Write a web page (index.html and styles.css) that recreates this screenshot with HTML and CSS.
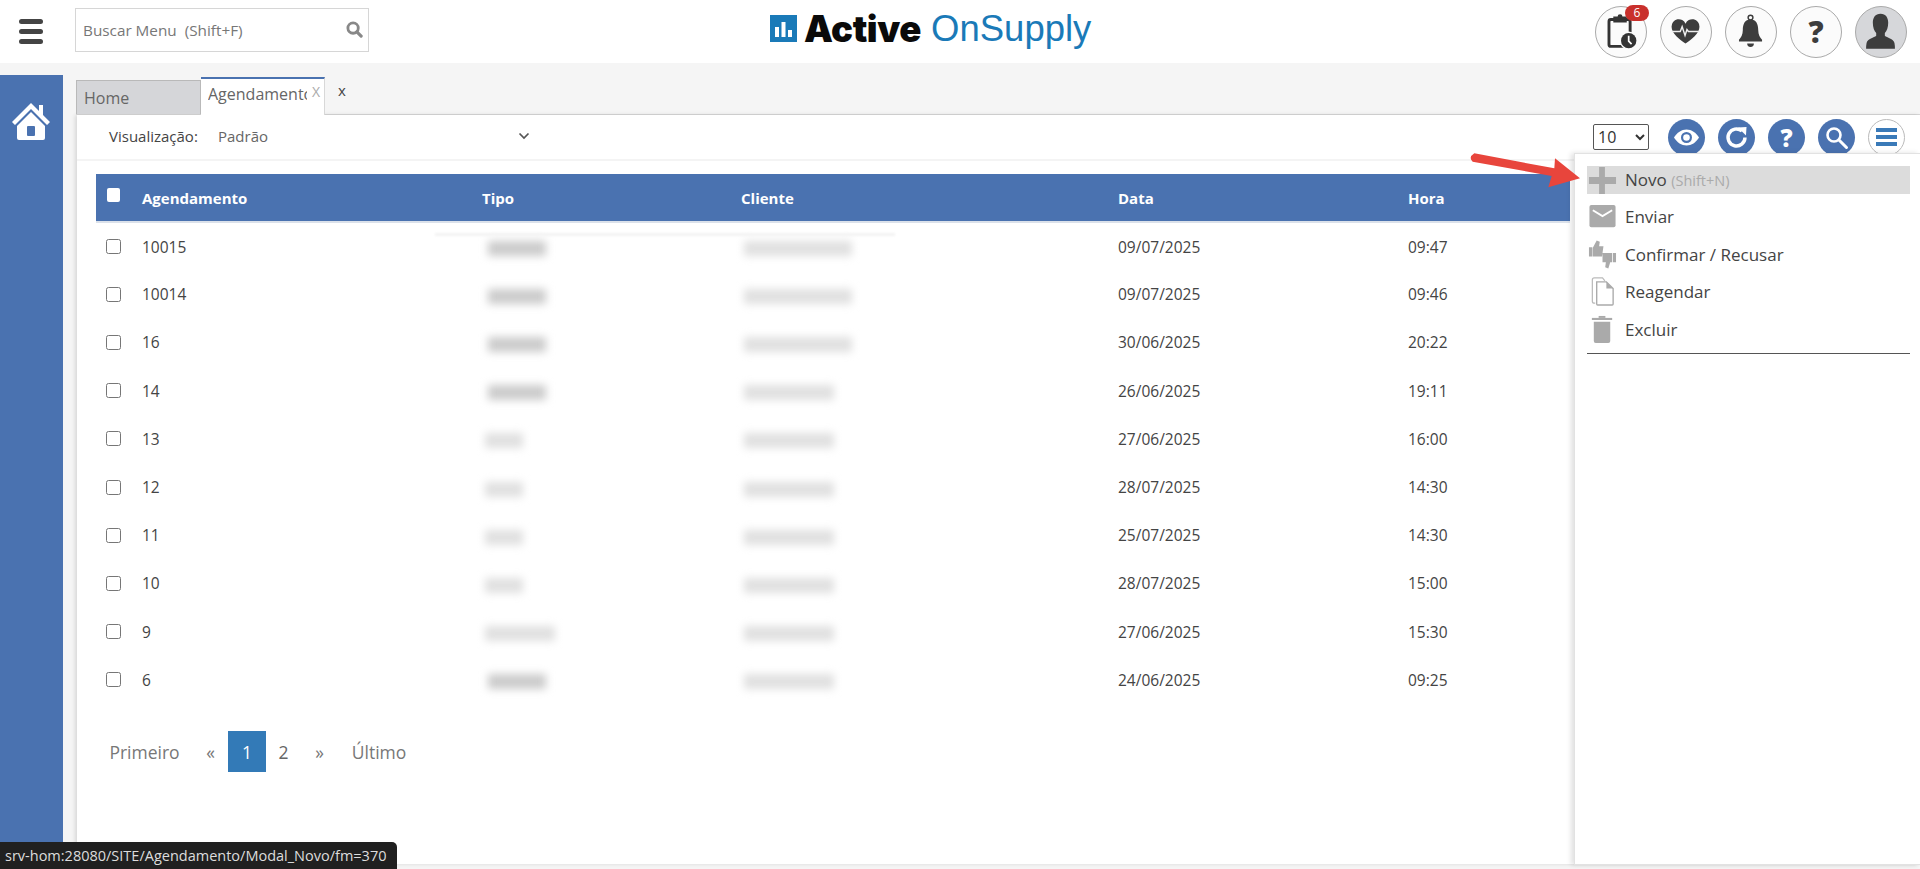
FILE: index.html
```html
<!DOCTYPE html>
<html lang="pt-BR">
<head>
<meta charset="utf-8">
<title>Active OnSupply</title>
<link rel="stylesheet" href="styles.css">
</head>
<body>
<header class="topbar">
  <div class="burger"><span></span><span></span><span></span></div>
  <div class="search">
    <span class="search-text">Buscar Menu&nbsp; (Shift+F)</span>
    <svg class="search-ico" viewBox="0 0 18 18"><circle cx="7.500" cy="7.500" r="5.500" fill="none" stroke="#888" stroke-width="3"/><path d="M11.500 11.500l4.500 4.500" stroke="#888" stroke-width="3.400" stroke-linecap="round"/></svg>
  </div>
  <div class="logo">
    <svg class="logo-mark" viewBox="0 0 27 27"><rect width="27" height="27" fill="#1a7ab8"/><path d="M5 12h4v10H5zM11.500 7h4v15h-4zM18 15h4v7h-4z" fill="#fff"/></svg>
    <span class="logo-a">Active</span><span class="logo-b">OnSupply</span>
  </div>
  <div class="top-icons">
    <div class="ring">
      <svg viewBox="0 0 52 52" class="ring-svg"><rect x="13.500" y="13" width="22" height="28" rx="2" fill="none" stroke="#333" stroke-width="3"/><path d="M18 10h4.500a2.500 2.500 0 0 1 5 0H32v6H18z" fill="#333"/><circle cx="34" cy="35" r="9.500" fill="#fbfbfb"/><circle cx="34" cy="35" r="8" fill="#333"/><path d="M34 30v5.500l3 3" fill="none" stroke="#fff" stroke-width="1.800"/></svg>
      <span class="badge">6</span>
    </div>
    <div class="ring">
      <svg viewBox="0 0 52 52" class="ring-svg"><path d="M25.500 38c-6-4.500-14.500-10-14.500-17.500a7.500 7.500 0 0 1 14.500-3A7.500 7.500 0 0 1 40 20.500c0 7.500-8.500 13-14.500 17.500z" fill="#3d3d3d"/><path d="M11 25.500h9l2-5 3 9 2-6 1.500 2H40" fill="none" stroke="#eee" stroke-width="1.500"/></svg>
    </div>
    <div class="ring">
      <svg viewBox="0 0 52 52" class="ring-svg"><circle cx="25.500" cy="11" r="2.500" fill="none" stroke="#3d3d3d" stroke-width="1.500"/><path d="M25.500 13c-6 0-8 5-8 11 0 5-2 8-4 10v2h24v-2c-2-2-4-5-4-10 0-6-2-11-8-11z" fill="#3d3d3d"/><path d="M22 38h7a3.500 3.500 0 0 1-7 0z" fill="#3d3d3d"/></svg>
    </div>
    <div class="ring ring-q">?</div>
    <div class="ring ring-user">
      <svg viewBox="0 0 52 52" class="ring-svg"><path d="M25.500 7c5.500 0 8 4 8 9.500 0 5-1.500 8.500-3.500 10.500v3c2 2 9 3 10 7.500.5 2 .5 4 .5 6H10.500c0-2 0-4 .5-6 1-4.500 8-5.500 10-7.500v-3c-2-2-3.500-5.500-3.500-10.500C17.500 11 20 7 25.500 7z" fill="#3d3d3d"/></svg>
    </div>
  </div>
</header>

<div class="workspace">
  <aside class="sidebar">
    <svg class="home-ico" viewBox="0 0 40 38"><path d="M20 1L1 20l3 3L20 7l16 16 3-3-7-7V3h-4v6z" fill="#fff"/><path d="M6 24L20 10l14 14v12a2 2 0 0 1-2 2H8a2 2 0 0 1-2-2z" fill="#fff"/><rect x="16" y="24" width="8" height="10" rx="1" fill="#4a72b0"/></svg>
  </aside>
  <main class="main">
    <nav class="tabs">
      <div class="tab tab-home">Home</div>
      <div class="tab tab-active"><span class="tab-label">Agendamento</span><span class="tab-x">X</span></div>
      <div class="tab-close">x</div>
    </nav>
    <section class="card">
      <div class="toolbar">
        <label class="view-label">Visualização:</label>
        <div class="view-select">
          <span>Padrão</span>
          <svg class="chev" viewBox="0 0 12 8"><path d="M1.500 1.500L6 6l4.500-4.500" fill="none" stroke="#555" stroke-width="1.700"/></svg>
        </div>
        <div class="tools">
          <select class="pagesize"><option>10</option><option>25</option></select>
          <div class="tool">
            <svg viewBox="0 0 37 37"><path d="M6 18.500c3-5 7.500-8 12.500-8s9.500 3 12.500 8c-3 5-7.500 8-12.500 8s-9.500-3-12.500-8z" fill="#fff"/><circle cx="18.500" cy="18.500" r="5.500" fill="#4a72b0"/><circle cx="18.500" cy="18.500" r="3.300" fill="#fff"/></svg>
          </div>
          <div class="tool">
            <svg viewBox="0 0 37 37"><path d="M27 18.500a8.500 8.500 0 1 1-3-6.500" fill="none" stroke="#fff" stroke-width="3.400"/><path d="M20 8.500l8.500-.5-.5 8.500z" fill="#fff"/></svg>
          </div>
          <div class="tool tool-q">?</div>
          <div class="tool">
            <svg viewBox="0 0 37 37"><circle cx="16" cy="16" r="6.500" fill="none" stroke="#fff" stroke-width="2.600"/><path d="M21 21l7.500 7.500" stroke="#fff" stroke-width="3" stroke-linecap="round"/></svg>
          </div>
          <div class="tool tool-menu"><span></span><span></span><span></span></div>
        </div>
      </div>

      <div class="grid-wrap">
      <table class="grid">
        <colgroup><col class="c-check"><col class="c-ag"><col class="c-tipo"><col class="c-cli"><col class="c-data"><col></colgroup>
        <thead>
          <tr><th><span class="head-check"></span></th><th>Agendamento</th><th>Tipo</th><th>Cliente</th><th>Data</th><th>Hora</th></tr>
        </thead>
        <tbody>
          <tr><td><input type="checkbox"></td><td>10015</td><td><i class="blur b-62"></i></td><td><i class="blur b-110 soft"></i></td><td>09/07/2025</td><td>09:47</td></tr>
          <tr><td><input type="checkbox"></td><td>10014</td><td><i class="blur b-62"></i></td><td><i class="blur b-110 soft"></i></td><td>09/07/2025</td><td>09:46</td></tr>
          <tr><td><input type="checkbox"></td><td>16</td><td><i class="blur b-62"></i></td><td><i class="blur b-110 soft"></i></td><td>30/06/2025</td><td>20:22</td></tr>
          <tr><td><input type="checkbox"></td><td>14</td><td><i class="blur b-62"></i></td><td><i class="blur b-92 soft"></i></td><td>26/06/2025</td><td>19:11</td></tr>
          <tr><td><input type="checkbox"></td><td>13</td><td><i class="blur b-38 soft"></i></td><td><i class="blur b-92 soft"></i></td><td>27/06/2025</td><td>16:00</td></tr>
          <tr><td><input type="checkbox"></td><td>12</td><td><i class="blur b-38 soft"></i></td><td><i class="blur b-92 soft"></i></td><td>28/07/2025</td><td>14:30</td></tr>
          <tr><td><input type="checkbox"></td><td>11</td><td><i class="blur b-38 soft"></i></td><td><i class="blur b-92 soft"></i></td><td>25/07/2025</td><td>14:30</td></tr>
          <tr><td><input type="checkbox"></td><td>10</td><td><i class="blur b-38 soft"></i></td><td><i class="blur b-92 soft"></i></td><td>28/07/2025</td><td>15:00</td></tr>
          <tr><td><input type="checkbox"></td><td>9</td><td><i class="blur b-70 soft"></i></td><td><i class="blur b-92 soft"></i></td><td>27/06/2025</td><td>15:30</td></tr>
          <tr><td><input type="checkbox"></td><td>6</td><td><i class="blur b-62"></i></td><td><i class="blur b-92 soft"></i></td><td>24/06/2025</td><td>09:25</td></tr>
        </tbody>
      </table>
      <div class="smear"></div>
      </div>

      <div class="pager">
        <a class="pg pg-first">Primeiro</a>
        <a class="pg pg-prev">«</a>
        <a class="pg pg-on">1</a>
        <a class="pg pg-two">2</a>
        <a class="pg pg-next">»</a>
        <a class="pg pg-last">Último</a>
      </div>
    </section>
  </main>
</div>

<aside class="actions">
  <div class="act act-on">
    <svg class="act-ico" viewBox="0 0 30 30"><path d="M11.500 1h6v10.500H29v7H17.500V29h-6V18.500H1v-7h10.500z" fill="#aaa"/></svg>
    <span class="act-text">Novo <small>(Shift+N)</small></span>
  </div>
  <div class="act">
    <svg class="act-ico" viewBox="0 0 30 30"><rect x="1.500" y="3" width="27" height="23" rx="2" fill="#aaa"/><path d="M5 8.500l10 6 10-6" fill="none" stroke="#fff" stroke-width="2"/></svg>
    <span>Enviar</span>
  </div>
  <div class="act">
    <svg class="act-ico" viewBox="0 0 30 30"><path d="M1 7.500h3.500V17H1zM5 8l4-7.500 3.200 1.200-.7 4.800h4.500L14.500 17H5zM15 13.500h10V23h-2l-2 6.500-3.200-1.200.7-5.300H15zM25.800 13.500H29V23h-3.200z" fill="#aaa"/></svg>
    <span>Confirmar / Recusar</span>
  </div>
  <div class="act">
    <svg class="act-ico" viewBox="0 0 30 30"><path d="M7.500 27H6.500a2 2 0 0 1-2-2V3a2 2 0 0 1 2-2H15l2.500 3" fill="none" stroke="#bbb" stroke-width="1.300"/><path d="M9 5h10l7 7v16a1 1 0 0 1-1 1H10a1 1 0 0 1-1-1z" fill="#fff" stroke="#aaa" stroke-width="1.400"/><path d="M19 5v7h7" fill="#aaa"/></svg>
    <span>Reagendar</span>
  </div>
  <div class="act">
    <svg class="act-ico" viewBox="0 0 30 30"><path d="M4 3h21v2.200H4z" fill="#aaa"/><path d="M11 1h7v2h-7z" fill="#aaa"/><path d="M6 7h17v20a2 2 0 0 1-2 2H8a2 2 0 0 1-2-2z" fill="#aaa"/></svg>
    <span>Excluir</span>
  </div>
  <div class="act-rule"></div>
</aside>

<svg class="arrow" viewBox="0 0 480 180">
  <path d="M103 40L343 85l2-30 75 60-95 27 10-34L98 65Q84 52 103 40z" fill="#e8453c"/>
</svg>

<div class="status">srv-hom:28080/SITE/Agendamento/Modal_Novo/fm=370</div>
</body>
</html>
```
FILE: styles.css
```css
* { box-sizing: border-box; }
html, body { margin: 0; height: 869px; overflow: hidden; }
body { background: #f5f5f5; font-family: "Open Sans", "Noto Sans", sans-serif; font-size: 15px; color: #444; position: relative; }

.topbar { height: 63px; background: #fff; display: flex; align-items: center; position: relative; }
.burger { width: 24px; margin-left: 19px; display: flex; flex-direction: column; gap: 5px; }
.burger span { height: 5px; background: #444; border-radius: 3px; }
.search { width: 294px; height: 44px; margin-left: 32px; margin-top: -3px; border: 1px solid #d6d6d6; display: flex; align-items: center; justify-content: space-between; padding: 0 5px 0 7px; }
.search-text { color: #777; font-size: 15.300px; }
.search-ico { width: 17px; height: 17px; margin-top: -2px; }
.logo { position: absolute; left: 770px; top: 15px; display: flex; align-items: center; height: 27px; }
.logo-mark { width: 27px; height: 27px; flex: none; }
.logo-a { font-family: "Inter", "Liberation Sans", sans-serif; font-weight: 900; font-size: 36.500px; color: #0a0a0a; margin-left: 7px; letter-spacing: -.4px; }
.logo-b { font-family: "Liberation Sans", sans-serif; font-size: 36.500px; color: #1a7ab8; margin-left: 10px; }
.top-icons { margin-left: auto; margin-right: 13px; display: flex; gap: 13px; }
.ring { width: 52px; height: 52px; border-radius: 50%; border: 1px solid #aaa; background: #fbfbfb; position: relative; display: flex; align-items: center; justify-content: center; }
.ring-svg { width: 50px; height: 50px; display: block; }
.ring-q { font-weight: 800; font-size: 30px; color: #3d3d3d; }
.ring-user { background: #d6d7da; overflow: hidden; }
.badge { position: absolute; right: -3px; top: -2px; width: 24px; height: 16px; border-radius: 9px; background: #c9302c; color: #fff; font-size: 12px; line-height: 16px; text-align: center; }

.workspace { display: flex; height: 806px; }
.sidebar { width: 63px; margin-top: 12px; background: #4a72b0; flex: none; display: flex; justify-content: center; align-items: flex-start; padding: 27px 2px 0 0; }
.home-ico { width: 40px; height: 38px; }
.main { flex: 1; margin-left: 14px; padding-top: 15px; min-width: 0; display: flex; flex-direction: column; }

.tabs { display: flex; height: 37px; align-items: flex-end; border-bottom: 1px solid #d8d8d8; margin-left: -1px; }
.tab { position: relative; }
.tab-home { width: 125px; height: 34px; background: #d5d6d9; border: 1px solid #b9b9b9; border-bottom: 0; color: #666; font-size: 16px; line-height: 34px; padding-left: 7px; }
.tab-active { width: 124px; height: 38px; margin-bottom: -1px; background: #fff; border-top: 2px solid #4a72b0; border-right: 1px solid #d8d8d8; color: #666; font-size: 16px; line-height: 30px; padding-left: 7px; display: flex; }
.tab-label { width: 99px; overflow: hidden; white-space: nowrap; }
.tab-x { color: #aaa; font-size: 14px; line-height: 26px; margin-left: 5px; }
.tab-close { align-self: flex-start; margin-left: 13px; font-size: 15px; line-height: 24px; color: #444; }

.card { flex: 1; background: #fff; box-shadow: -2px 0 4px rgba(0,0,0,.12); margin-bottom: 5px; }
.toolbar { height: 46px; display: flex; align-items: center; border-bottom: 2px solid #f4f4f4; padding-left: 32px; }
.view-label { color: #444; font-size: 15px; width: 109px; margin-top: -2px; }
.view-select { width: 314px; display: flex; align-items: center; justify-content: space-between; color: #666; font-size: 15px; padding-right: 2px; margin-top: -2px; }
.chev { width: 12px; height: 8px; }
.tools { margin-left: auto; margin-right: 15px; display: flex; align-items: center; gap: 13px; }
.pagesize { width: 56px; height: 26px; margin-right: 6px; background: #fff; border: 1px solid #555; border-radius: 2px; color: #333; font-family: inherit; font-size: 16px; }
.tool { width: 37px; height: 37px; border-radius: 50%; background: #4a72b0; display: flex; align-items: center; justify-content: center; }
.tool svg { width: 37px; height: 37px; display: block; }
.tool-q { color: #fff; font-weight: 800; font-size: 24px; }
.tool-menu { background: #fff; border: 1px solid #bbb; flex-direction: column; gap: 3px; }
.tool-menu span { width: 21px; height: 4px; background: #3a7ab8; }

.grid-wrap { position: relative; }
.smear { position: absolute; left: 358px; top: 59px; width: 460px; height: 3px; background: #f3f3f3; filter: blur(1px); }
.grid { border-collapse: collapse; table-layout: fixed; width: 1474px; margin: 13px 0 0 19px; color: #444; }
.c-check { width: 46px; }
.c-ag { width: 340px; }
.c-tipo { width: 259px; }
.c-cli { width: 377px; }
.c-data { width: 290px; }
.grid thead tr { background: #4a72b0; height: 48px; border-bottom: 2px solid #dbe1ea; }
.grid th { color: #fff; font-weight: 700; text-align: left; padding: 0; font-size: 15px; }
.grid td { height: 48.200px; padding: 0; font-size: 15.500px; }
.head-check { display: block; width: 13px; height: 14px; background: #fff; border-radius: 2px; margin: -5px 0 0 11px; }
.grid input { display: block; width: 15px; height: 15px; margin: 0 0 0 10px; accent-color: #4a72b0; }
.blur { display: block; height: 15px; background: #cbcbcb; filter: blur(4.500px); margin-top: 4px; }
.blur.soft { background: #e0e0e0; margin-left: 3px; }
.b-110 { width: 108px; }
.b-92 { width: 90px; }
.b-70 { width: 70px; }
.b-62 { width: 58px; margin-left: 6px; }
.b-38 { width: 38px; }

.pager { display: flex; align-items: flex-start; height: 41px; margin: 27px 0 0 19px; color: #777; font-size: 17.500px; }
.pg { display: block; text-align: center; line-height: 43px; height: 41px; }
.pg-first { width: 97px; }
.pg-prev { width: 35px; }
.pg-on { width: 38px; background: #337ab7; color: #fff; }
.pg-two { width: 35px; color: #666; }
.pg-next { width: 37px; }
.pg-last { width: 82px; }

.actions { position: absolute; top: 153px; right: 0; width: 346px; height: 712px; background: #fff; border: 1px solid #e2e2e2; border-right: 0; box-shadow: -3px 0 5px rgba(0,0,0,.12); padding: 12px 10px 0 12px; display: flex; flex-direction: column; }
.act { height: 37.500px; display: flex; align-items: center; gap: 8px; font-size: 17px; color: #444; padding-left: 1px; flex: none; }
.act-on { height: 28px; background: #dcdcdc; margin-bottom: 4px; }
.act-text { margin-top: -2px; }
.act small { color: #aaa; font-size: 14.500px; }
.act-ico { width: 29px; height: 29px; flex: none; }
.act-rule { border-top: 1px solid #555; margin-top: 5px; }

.arrow { position: absolute; left: 1440px; top: 140px; width: 160px; height: 60px; }

.status { position: absolute; left: 0; bottom: 0; width: 397px; height: 27px; background: #202020; color: #ddd; border-top-right-radius: 5px; font-size: 14.500px; line-height: 27px; padding-left: 5px; white-space: nowrap; overflow: hidden; }
```
